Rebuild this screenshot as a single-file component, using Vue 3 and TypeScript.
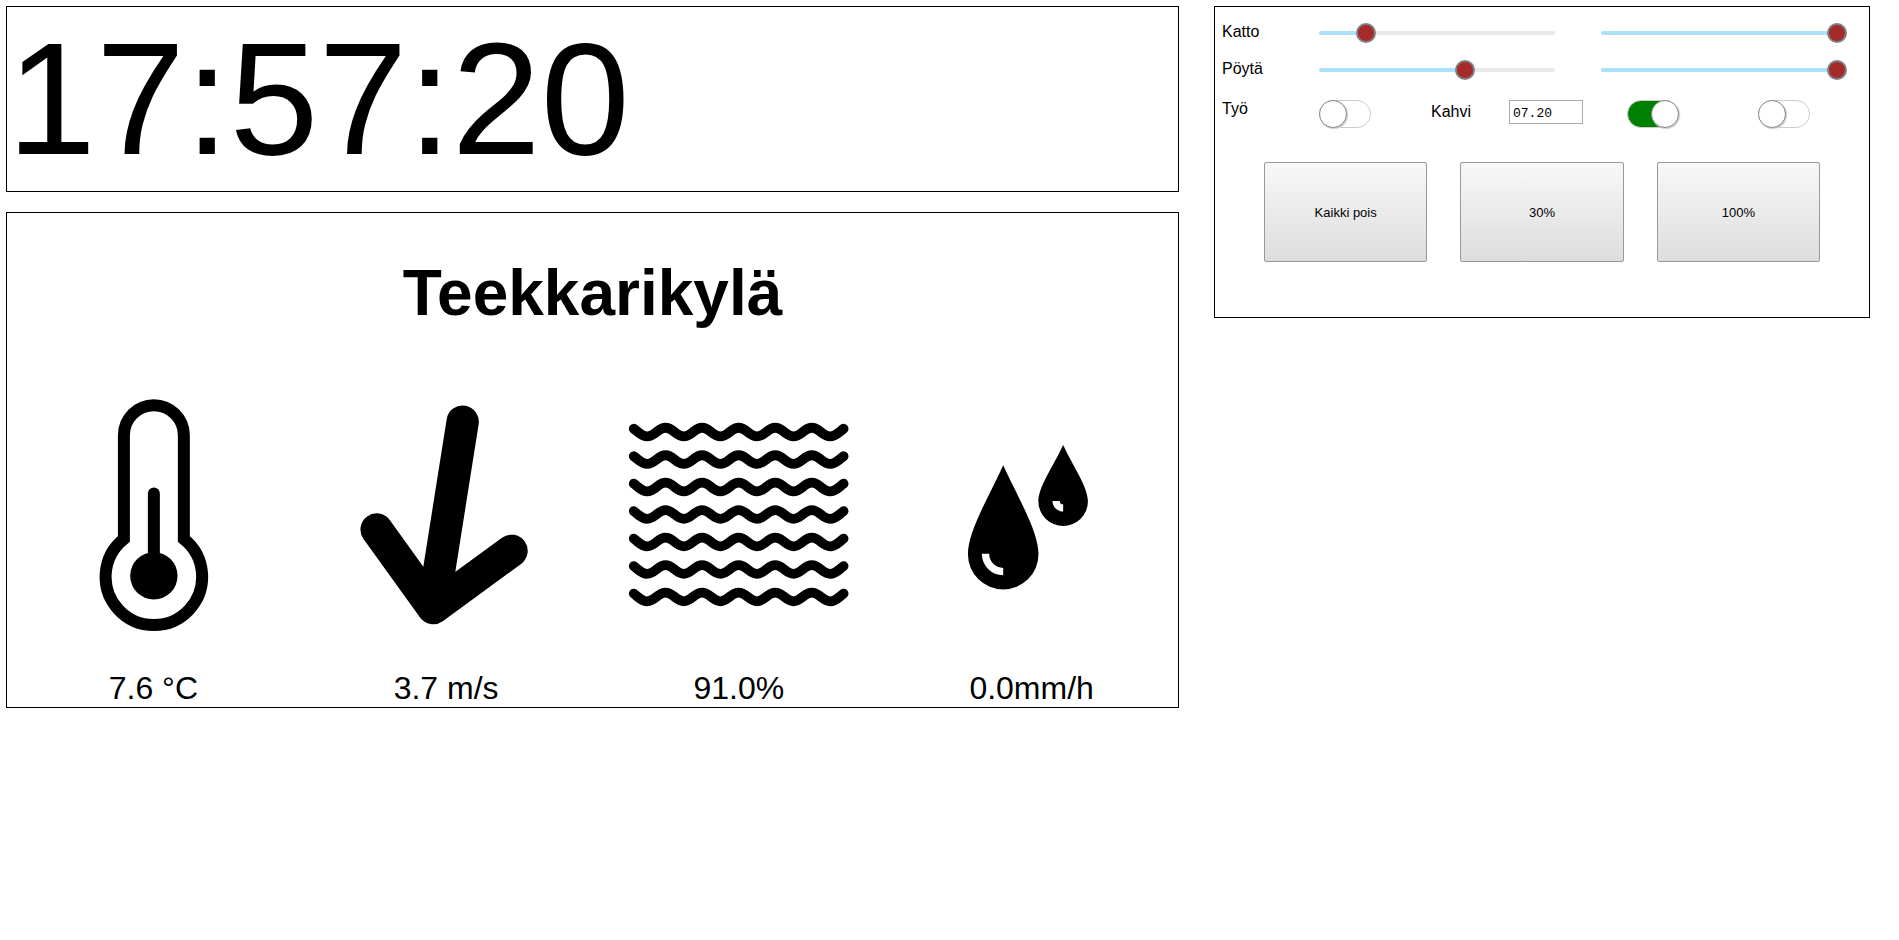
<script setup lang="ts">
import { reactive, ref } from 'vue'

interface Lamp {
  id: string
  label: string
  levels: { name: string; value: number }[]
}

const time = ref('17:57:20')
const coffeeTime = ref('07.20')
const work = ref(false)
const coffee = ref(true)
const extra = ref(false)

const lamps = reactive<Lamp[]>([
  { id: 'katto', label: 'Katto', levels: [{ name: 'Katto 1', value: 20 }, { name: 'Katto 2', value: 100 }] },
  { id: 'poyta', label: 'Pöytä', levels: [{ name: 'Pöytä 1', value: 62 }, { name: 'Pöytä 2', value: 100 }] },
])

const presets = [
  { label: 'Kaikki pois', level: 0 },
  { label: '30%', level: 30 },
  { label: '100%', level: 100 },
]

const waveRows = [0, 27.5, 55, 82.5, 110, 137.5, 165]
const wave =
  'M40.8 55.8c5.3 4 7.8 7.7 13.5 7.7' +
  'c7.3 0 11-8.7 18.3-8.7s11 8.7 18.3 8.7'.repeat(5) +
  'c5.7 0 8.2-3.7 13.5-7.7'

function setAll(level: number) {
  lamps.forEach((lamp) => lamp.levels.forEach((l) => (l.value = level)))
}
</script>

<template>
  <main class="dashboard">
    <div class="column">
      <section class="panel clock">{{ time }}</section>

      <section class="panel weather">
        <h1>Teekkarikylä</h1>
        <div class="readings">
          <figure>
            <svg viewBox="0 0 293 293" aria-hidden="true">
              <path
                d="M117 166.1V62.3a30 30 0 0 1 60 0V166.1A48.3 48.3 0 1 1 117 166.1Z"
                fill="none" stroke="#000" stroke-width="12"
              />
              <path d="M147 120.7V200" stroke="#000" stroke-width="12" stroke-linecap="round" />
              <circle cx="147" cy="203" r="23.7" />
            </svg>
            <figcaption>7.6 °C</figcaption>
          </figure>
          <figure>
            <svg viewBox="0 0 293 293" aria-hidden="true">
              <path
                d="M162.8 48.7L133.3 235.3M76.7 156.7L133.3 235.3L211.7 178"
                fill="none" stroke="#000" stroke-width="32.4" stroke-linecap="round" stroke-linejoin="round"
              />
            </svg>
            <figcaption>3.7 m/s</figcaption>
          </figure>
          <figure>
            <svg viewBox="0 0 293 293" aria-hidden="true">
              <g fill="none" stroke="#000" stroke-width="9.8" stroke-linecap="round">
                <path v-for="dy in waveRows" :key="dy" :d="wave" :transform="`translate(0 ${dy})`" />
              </g>
            </svg>
            <figcaption>91.0%</figcaption>
          </figure>
          <figure>
            <svg viewBox="0 0 293 293" aria-hidden="true">
              <path d="M118.3 92.4C104 124 83 158 83 181.3a35.3 35.3 0 0 0 70.6 0C153.6 158 132.6 124 118.3 92.4Z" />
              <path d="M178.3 72C168 94 153.5 114 153.5 128.3a24.8 24.8 0 0 0 49.6 0C203.1 114 188.6 94 178.3 72Z" />
              <g fill="none" stroke="#fff" stroke-width="7.3">
                <path d="M100.6 181a17.7 17.7 0 0 0 17.7 17.7" />
                <path d="M171.3 128a7 7 0 0 0 7 7" />
              </g>
            </svg>
            <figcaption>0.0mm/h</figcaption>
          </figure>
        </div>
      </section>
    </div>

    <section class="panel controls">
      <div v-for="lamp in lamps" :key="lamp.id" class="lamp-row">
        <label :for="`${lamp.id}-0`">{{ lamp.label }}</label>
        <div v-for="(level, i) in lamp.levels" :key="level.name" class="slider">
          <div class="rail"><div class="fill" :style="{ width: `${level.value}%` }"></div></div>
          <input
            :id="`${lamp.id}-${i}`" v-model.number="level.value"
            type="range" min="0" max="100" :aria-label="level.name"
          />
        </div>
      </div>

      <div class="switch-row">
        <label for="work">Työ</label>
        <input id="work" v-model="work" class="switch" type="checkbox" />
        <label class="coffee" for="coffee-time">Kahvi</label>
        <input id="coffee-time" v-model="coffeeTime" class="time" type="text" />
        <input v-model="coffee" class="switch" type="checkbox" aria-label="Kahvi" />
        <input v-model="extra" class="switch" type="checkbox" aria-label="Kahvi 2" />
      </div>

      <div class="presets">
        <button v-for="p in presets" :key="p.label" type="button" @click="setAll(p.level)">{{ p.label }}</button>
      </div>
    </section>
  </main>
</template>

<style>
body {
  margin: 0;
  background: #fff;
}
</style>

<style scoped>
.dashboard {
  display: grid;
  grid-template-columns: 1173fr 656fr;
  align-items: start;
  gap: 35px;
  padding: 6px 29px 6px 6px;
  font-family: Arial, "Liberation Sans", sans-serif;
  font-size: 16px;
  line-height: 18px;
  color: #000;
}

.column {
  display: grid;
  gap: 20px;
}

.panel {
  border: 1px solid #000;
}

.clock {
  font-size: 160px;
  line-height: 184px;
}

h1 {
  margin: 43px 0;
  font-size: 64px;
  line-height: 74px;
  text-align: center;
}

.readings {
  display: grid;
  grid-template-columns: repeat(4, 1fr);
}

figure {
  margin: 0;
}

figure svg {
  display: block;
  width: 100%;
  margin-bottom: 4px;
}

figcaption {
  font-size: 32px;
  line-height: 37px;
  text-align: center;
}

.controls {
  padding: 16px 0 55px;
}

.lamp-row {
  display: grid;
  grid-template-columns: 97fr 236fr 46fr 236fr 32fr;
  margin-bottom: 17px;
  padding-left: 7px;
}

.slider {
  display: grid;
  align-items: center;
  height: 20px;
}

.slider:last-child {
  grid-column: 4;
}

.rail,
.slider input {
  grid-area: 1 / 1;
}

.rail {
  height: 4px;
  border-radius: 2px;
  background: #e9e9e9;
}

.fill {
  height: 4px;
  border-radius: 2px;
  background: #abe2fb;
}

.slider input {
  appearance: none;
  height: 20px;
  margin: 0 -10px;
  background: transparent;
}

.slider input::-webkit-slider-thumb {
  appearance: none;
  box-sizing: border-box;
  width: 20px;
  height: 20px;
  border: 2px solid #808080;
  border-radius: 50%;
  background: #a52a2a;
}

.switch-row {
  display: grid;
  grid-template-columns: 97fr 112fr 78fr 118fr 131fr 111fr;
  align-items: start;
  margin-top: 20px;
  padding-left: 7px;
}

.coffee {
  padding-top: 3px;
}

.switch {
  appearance: none;
  box-sizing: border-box;
  display: flex;
  width: 52px;
  height: 28px;
  margin: 0;
  border: 1px solid #ccc;
  border-radius: 14px;
  background: #fff;
}

.switch::before {
  content: "";
  box-sizing: border-box;
  width: 28px;
  height: 28px;
  margin: -1px;
  border: 1px solid #888;
  border-radius: 14px;
  background: #fff;
  box-shadow: 1px 1px 1px #ccc;
}

.switch:checked {
  justify-content: flex-end;
  background: #008000;
}

.time {
  box-sizing: border-box;
  width: 74px;
  height: 24px;
  margin: 0;
  padding: 2px 3px 0;
  border: 1px solid #a9a9a9;
  background: #fff;
  color: #000;
  font-family: "Liberation Mono", monospace;
  font-size: 13px;
}

.presets {
  display: grid;
  grid-template-columns: repeat(3, 1fr);
  gap: 33px;
  margin-top: 34px;
  padding: 0 49px;
}

button {
  height: 100px;
  padding: 0;
  border: 1px solid #999;
  border-radius: 2px;
  background: linear-gradient(#f8f8f8, #ddd);
  color: #000;
  font-family: Arial, "Liberation Sans", sans-serif;
  font-size: 13px;
}
</style>
